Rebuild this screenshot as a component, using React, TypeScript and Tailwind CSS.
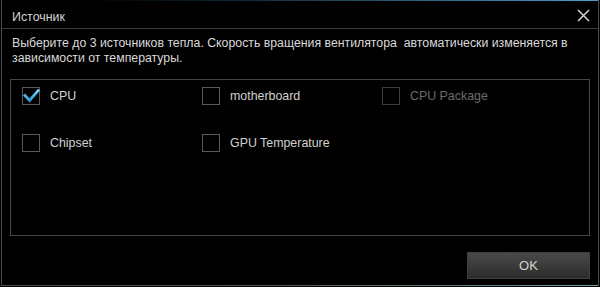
import React from "react";

function Box({ checked, disabled }: { checked?: boolean; disabled?: boolean }) {
  return (
    <div
      className={
        "relative w-[18px] h-[18px] shrink-0 border " +
        (disabled ? "border-[#3c3c3c]" : "border-[#5a5a5a]")
      }
    >
      {checked && (
        <svg
          className="absolute left-[-1px] top-[-1px]"
          width="18"
          height="18"
          viewBox="0 0 18 18"
        >
          <defs>
            <linearGradient id="ck" x1="0" y1="0" x2="0" y2="1">
              <stop offset="0" stopColor="#6fd3ff" />
              <stop offset="1" stopColor="#2f9fd6" />
            </linearGradient>
          </defs>
          <path
            d="M2 7.5 L7.6 13.4 L17 2.6"
            fill="none"
            stroke="url(#ck)"
            strokeWidth="2.8"
            strokeLinejoin="miter"
          />
        </svg>
      )}
    </div>
  );
}

function Item({
  label,
  checked,
  disabled,
}: {
  label: string;
  checked?: boolean;
  disabled?: boolean;
}) {
  return (
    <div className="flex items-center gap-[10px] h-[18px]">
      <Box checked={checked} disabled={disabled} />
      <span
        className={
          "text-[12.4px] leading-[15px] mt-[1px] " +
          (disabled ? "text-[#6b6b6b]" : "text-[#d0d0d0]")
        }
      >
        {label}
      </span>
    </div>
  );
}

export default function App() {
  return (
    <div
      className="w-[600px] h-[287px] bg-black overflow-hidden"
      style={{ fontFamily: '"Liberation Sans", Arial, sans-serif' }}
    >
      <div className="ml-[1px] w-[598px] h-[286px] border-x border-[#4a4a4a] flex flex-col">
        <div className="h-px bg-gradient-to-r from-[#000000] via-[#1c3a4a] to-[#4a9fcf]" />
        <div className="h-[28px] border-b border-[#3a3a3a] flex items-center pl-[10px]">
          <span className="text-[12.4px] leading-[15px] text-[#d4d4d4] mt-[5px]">
            Источник
          </span>
          <svg
            className="ml-auto mr-[8px] mt-[1px]"
            width="13"
            height="13"
            viewBox="0 0 13 13"
          >
            <path
              d="M1 1 L12 12 M12 1 L1 12"
              stroke="#cfcfcf"
              strokeWidth="1.6"
              fill="none"
            />
          </svg>
        </div>
        <div className="pl-[10px] pt-[7px] text-[12.3px] leading-[15px] text-[#dadada]">
          Выберите до 3 источников тепла. Скорость вращения вентилятора&nbsp;
          автоматически изменяется в
          <br />
          зависимости от температуры.
        </div>
        <div className="ml-[8px] mt-[13px] w-[580px] h-[157px] border border-[#474747] pl-[11px] pt-[7px]">
          <div className="grid grid-cols-[180px_180px_180px] gap-y-[29px]">
            <Item label="CPU" checked />
            <Item label="motherboard" />
            <Item label="CPU Package" disabled />
            <Item label="Chipset" />
            <Item label="GPU Temperature" />
          </div>
        </div>
        <div className="flex justify-end mr-[8px] mt-[16px]">
          <button className="w-[123px] h-[27px] bg-gradient-to-b from-[#4a4a4a] to-[#2c2c2c] border border-[#3e3e3e] text-[13px] text-[#d4d4d4] flex items-center justify-center">
            OK
          </button>
        </div>
        <div className="mt-auto h-px bg-gradient-to-r from-[#4a4a4a] via-[#4e5a5e] to-[#6a9aa8]" />
      </div>
    </div>
  );
}
